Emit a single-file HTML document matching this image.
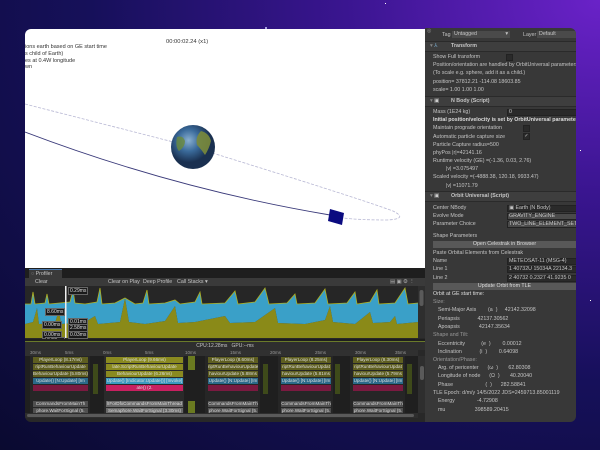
<!DOCTYPE html>
<html><head><meta charset="utf-8"><style>
*{margin:0;padding:0;box-sizing:border-box}
body{width:600px;height:450px;overflow:hidden;position:relative;font-family:"Liberation Sans",sans-serif;
background:radial-gradient(ellipse at 100% 0%,#6a22c8 0%,#3a1590 30%,#16105a 60%,#0a0a30 100%);}
.a{position:absolute;white-space:nowrap}
#ins{position:absolute;left:425px;top:28px;width:151px;height:394px;background:#383838;border-radius:0 6px 6px 0;overflow:hidden;color:#c4c4c4;font-size:5.3px}
#ins .a{line-height:7px}
.hd{position:absolute;left:0;width:151px;height:11px;background:#3e3e3e;border-top:1px solid #2a2a2a;border-bottom:1px solid #2a2a2a}
.fld{position:absolute;left:82px;width:70px;height:7px;background:#2a2a2a;border:1px solid #222}
.btn{position:absolute;left:8px;width:143px;height:7px;background:#585858;text-align:center;line-height:7px;color:#ddd}
.cb{position:absolute;width:7px;height:7px;background:#2a2a2a;border:1px solid #222}
#prof{position:absolute;left:25px;top:268px;width:400px;height:154px;background:#282828;border-radius:0 0 0 6px;overflow:hidden;font-size:5.3px;color:#c4c4c4}
.bar{position:absolute;height:6px;line-height:6px;font-size:4.6px;color:#ddd;text-align:center;overflow:hidden}
.lbl{position:absolute;background:#1a1a1a;color:#ddd;font-size:5px;padding:0 1px;line-height:6px;border:1px solid #666}
</style></head><body>
<div class="a" style="left:50px;top:384px;width:2px;height:2px;background:#fff;border-radius:1px"></div>
<div class="a" style="left:265px;top:27px;width:2px;height:2px;background:#ccf;border-radius:1px"></div>
<div class="a" style="left:580px;top:150px;width:1px;height:1px;background:#fff"></div>
<div class="a" style="left:590px;top:300px;width:1px;height:1px;background:#fff"></div>
<div class="a" style="left:385px;top:3px;width:1px;height:1px;background:#fff"></div>

<div class="a" style="left:25px;top:29px;width:400px;height:239px;background:#fff;border-radius:6px 0 0 0;overflow:hidden">
<div class="a" style="left:0;top:15px;font-size:5.5px;line-height:6.8px;color:#333">ions earth based on GE start time<br>s child of Earth)<br>es at 0.4W longitude<br>wn</div>
<div class="a" style="left:141px;top:10px;font-size:5.8px;color:#333">00:00:02.24 (x1)</div>
<svg class="a" style="left:0;top:0" width="400" height="239">
<path d="M0 75 L168 118 Q330 168 368 182 Q384 190 362 191 Q335 191 318 189" fill="none" stroke="#b8b8d4" stroke-width="0.8" stroke-dasharray="3 1.5"/>
<path d="M0 103 Q150 160 305 186" fill="none" stroke="#3a3a7a" stroke-width="0.9"/>
<defs><radialGradient id="e" cx="40%" cy="35%"><stop offset="0" stop-color="#8ab0d0"/><stop offset="0.5" stop-color="#3a6a9a"/><stop offset="1" stop-color="#1a3050"/></radialGradient></defs>
<circle cx="168" cy="118" r="22" fill="url(#e)"/>
<path d="M176 102 q8 2 10 10 q-2 8 -6 14 q-4 -6 -8 -10 q-2 -8 4 -14z" fill="#7a8a3a" opacity="0.9"/>
<path d="M152 108 q6 -2 8 4 q0 6 -6 10 q-4 -4 -2 -14z" fill="#6a8a3a" opacity="0.8"/>
<path d="M305 180 l14 4 l-2 12 l-14 -4z" fill="#0a0a80"/>
</svg>
</div>

<div id="ins">
<div class="a" style="left:2px;top:0;font-size:5px;color:#999">◎</div>
<div class="a" style="left:17px;top:4px">Tag</div>
<div class="a" style="left:27px;top:3px;width:58px;height:7px;background:#4a4a4a;padding-left:2px;line-height:7px">Untagged<span style="float:right;padding-right:2px">▾</span></div>
<div class="a" style="left:98px;top:4px">Layer</div>
<div class="a" style="left:112px;top:3px;width:40px;height:7px;background:#4a4a4a;padding-left:2px;line-height:7px">Default</div>

<div class="hd" style="top:13px"></div><div class="a" style="left:5px;top:15px;color:#888">▾ <span style="color:#7ac">⅄</span></div><div class="a" style="left:26px;top:15px;font-weight:bold">Transform</div>
<div class="a" style="left:8px;top:26px">Show Full transform</div><div class="cb" style="left:81px;top:26px"></div>
<div class="a" style="left:8px;top:34px">Position/orientation are handled by OrbitUniversal parameters</div>
<div class="a" style="left:8px;top:42px">(To scale e.g. sphere, add it as a child.)</div>
<div class="a" style="left:8px;top:51px">position= 37812.21 -114.08 18603.85</div>
<div class="a" style="left:8px;top:59px">scale= 1.00 1.00 1.00</div>

<div class="hd" style="top:68px"></div><div class="a" style="left:5px;top:70px;color:#888">▾ <span style="color:#ccc">▣</span></div><div class="a" style="left:26px;top:70px;font-weight:bold">N Body (Script)</div>
<div class="a" style="left:8px;top:81px">Mass (1E24 kg)</div><div class="fld" style="top:81px"></div><div class="a" style="left:84px;top:81px">0</div>
<div class="a" style="left:8px;top:89px;font-weight:bold;color:#ddd">Initial position/velocity is set by OrbitUniversal parameters</div>
<div class="a" style="left:8px;top:97px">Maintain prograde orientation</div><div class="cb" style="left:98px;top:97px"></div>
<div class="a" style="left:8px;top:106px">Automatic particle capture size</div><div class="cb" style="left:98px;top:105px;font-size:5px;line-height:5px;text-align:center">✓</div>
<div class="a" style="left:8px;top:114px">Particle Capture radius=500</div>
<div class="a" style="left:8px;top:122px">phyPos |r|=42141.16</div>
<div class="a" style="left:8px;top:130px">Runtime velocity (GE) =(-1.36, 0.03, 2.76)</div>
<div class="a" style="left:21px;top:138px">|v| =3.075497</div>
<div class="a" style="left:8px;top:146px">Scaled velocity =(-4888.38, 120.18, 9933.47)</div>
<div class="a" style="left:21px;top:155px">|v| =11071.79</div>

<div class="hd" style="top:163px"></div><div class="a" style="left:5px;top:165px;color:#888">▾ <span style="color:#ccc">▣</span></div><div class="a" style="left:26px;top:165px;font-weight:bold">Orbit Universal (Script)</div>
<div class="a" style="left:8px;top:177px">Center NBody</div><div class="fld" style="top:177px"></div><div class="a" style="left:84px;top:177px">▣ Earth (N Body)</div>
<div class="a" style="left:8px;top:185px">Evolve Mode</div><div class="fld" style="top:185px;background:#4a4a4a"></div><div class="a" style="left:84px;top:185px">GRAVITY_ENGINE</div>
<div class="a" style="left:8px;top:193px">Parameter Choice</div><div class="fld" style="top:193px;background:#4a4a4a"></div><div class="a" style="left:84px;top:193px">TWO_LINE_ELEMENT_SET</div>
<div class="a" style="left:8px;top:205px">Shape Parameters</div>
<div class="btn" style="top:213px">Open Celestrak in Browser</div>
<div class="a" style="left:8px;top:222px">Paste Orbital Elements from Celestrak</div>
<div class="a" style="left:8px;top:230px">Name</div><div class="fld" style="top:230px"></div><div class="a" style="left:84px;top:230px">METEOSAT-11 (MSG-4)</div>
<div class="a" style="left:8px;top:238px">Line 1</div><div class="fld" style="top:238px"></div><div class="a" style="left:84px;top:238px">1 40732U 15034A 22134.3</div>
<div class="a" style="left:8px;top:247px">Line 2</div><div class="fld" style="top:247px"></div><div class="a" style="left:84px;top:247px">2 40732 0.2327 41.9235 0</div>
<div class="btn" style="top:255px">Update Orbit from TLE</div>
<div class="a" style="left:8px;top:263px;color:#ddd">Orbit at GE start time:</div>
<div class="a" style="left:8px;top:271px;color:#999">Size:</div>
<div class="a" style="left:13px;top:279px">Semi-Major Axis &nbsp;&nbsp;&nbsp;&nbsp;&nbsp;&nbsp;&nbsp;(a &nbsp;) &nbsp;&nbsp;&nbsp;&nbsp;42142.32098</div>
<div class="a" style="left:13px;top:288px">Periapsis &nbsp;&nbsp;&nbsp;&nbsp;&nbsp;&nbsp;&nbsp;&nbsp;&nbsp;&nbsp;&nbsp;42137.30562</div>
<div class="a" style="left:13px;top:296px">Apoapsis &nbsp;&nbsp;&nbsp;&nbsp;&nbsp;&nbsp;&nbsp;&nbsp;&nbsp;&nbsp;&nbsp;&nbsp;42147.35634</div>
<div class="a" style="left:8px;top:304px;color:#999">Shape and Tilt:</div>
<div class="a" style="left:13px;top:313px">Eccentricity &nbsp;&nbsp;&nbsp;&nbsp;&nbsp;&nbsp;&nbsp;&nbsp;&nbsp;&nbsp;(e &nbsp;) &nbsp;&nbsp;&nbsp;&nbsp;&nbsp;&nbsp;&nbsp;0.00012</div>
<div class="a" style="left:13px;top:321px">Inclination &nbsp;&nbsp;&nbsp;&nbsp;&nbsp;&nbsp;&nbsp;&nbsp;&nbsp;&nbsp;&nbsp;(i &nbsp;) &nbsp;&nbsp;&nbsp;&nbsp;&nbsp;&nbsp;&nbsp;0.64098</div>
<div class="a" style="left:8px;top:329px;color:#999">Orientation/Phase:</div>
<div class="a" style="left:13px;top:337px">Arg. of pericenter &nbsp;&nbsp;&nbsp;&nbsp;&nbsp;(ω &nbsp;) &nbsp;&nbsp;&nbsp;&nbsp;&nbsp;&nbsp;62.80308</div>
<div class="a" style="left:13px;top:345px">Longitude of node &nbsp;&nbsp;&nbsp;&nbsp;&nbsp;(Ω &nbsp;) &nbsp;&nbsp;&nbsp;&nbsp;&nbsp;&nbsp;40.20040</div>
<div class="a" style="left:13px;top:354px">Phase &nbsp;&nbsp;&nbsp;&nbsp;&nbsp;&nbsp;&nbsp;&nbsp;&nbsp;&nbsp;&nbsp;&nbsp;&nbsp;&nbsp;&nbsp;&nbsp;&nbsp;&nbsp;&nbsp;&nbsp;&nbsp;(&nbsp;&nbsp;) &nbsp;&nbsp;&nbsp;&nbsp;&nbsp;282.58841</div>
<div class="a" style="left:8px;top:362px">TLE Epoch: d/m/y 14/5/2022 JDS=2459713.85001119</div>
<div class="a" style="left:13px;top:370px">Energy &nbsp;&nbsp;&nbsp;&nbsp;&nbsp;&nbsp;&nbsp;&nbsp;&nbsp;&nbsp;&nbsp;&nbsp;&nbsp;&nbsp;-4.72908</div>
<div class="a" style="left:13px;top:379px">mu &nbsp;&nbsp;&nbsp;&nbsp;&nbsp;&nbsp;&nbsp;&nbsp;&nbsp;&nbsp;&nbsp;&nbsp;&nbsp;&nbsp;&nbsp;&nbsp;&nbsp;&nbsp;&nbsp;398589.20415</div>
</div>

<div id="prof">
<div class="a" style="left:0;top:0;width:400px;height:10px;background:#1e1e1e"></div>
<div class="a" style="left:4px;top:1px;width:33px;height:9px;background:#3a3a3a;border-top:1px solid #4a7ab0;padding-left:2px;line-height:8px">◌ Profiler</div>
<div class="a" style="left:0;top:10px;width:400px;height:8px;background:#3a3a3a;line-height:8px">
<span style="position:absolute;left:10px">Clear</span><span style="position:absolute;left:83px">Clear on Play</span><span style="position:absolute;left:118px">Deep Profile</span><span style="position:absolute;left:152px">Call Stacks ▾</span><span style="position:absolute;left:365px;color:#aaa">▤ ▣ ⚙ ⋮</span></div>
<svg class="a" style="left:0;top:18px" width="400" height="52">
<rect width="400" height="52" fill="#262626"/>
<polygon fill="#8a8a18" points="0,52 0,38 8,36 12,22 14,38 30,37 34,24 36,38 60,36 70,30 73,38 95,36 100,12 104,36 120,38 140,35 150,20 153,37 170,36 200,30 205,37 230,36 250,22 253,37 280,38 300,34 305,20 308,36 330,38 345,26 348,37 365,36 370,30 372,38 393,36 393,52"/>
<polygon fill="#3aa0c8" points="0,38 0,18 6,18 8,6 10,18 20,17 22,8 24,18 45,16 48,4 50,17 60,18 72,16 75,2 77,18 90,17 100,12 110,18 118,17 122,4 124,18 140,17 150,14 155,18 170,16 175,6 177,18 200,17 210,5 213,18 230,16 240,2 244,18 262,17 270,8 272,18 290,17 300,3 303,18 322,17 330,6 332,18 345,16 352,4 354,18 370,17 380,2 383,18 393,17 393,36 372,38 370,30 365,36 348,37 345,26 330,38 308,36 305,20 300,34 280,38 253,37 250,22 230,36 205,37 200,30 170,36 153,37 150,20 140,35 120,38 104,36 100,12 95,36 73,38 70,30 60,36 36,38 34,24 30,37 14,38 12,22 8,36"/>
<polyline fill="none" stroke="#b0b020" stroke-width="0.8" points="0,18 6,18 8,6 10,18 20,17 22,8 24,18 45,16 48,4 50,17 60,18 72,16 75,2 77,18 90,17 100,12 110,18 118,17 122,4 124,18 140,17 150,14 155,18 170,16 175,6 177,18 200,17 210,5 213,18 230,16 240,2 244,18 262,17 270,8 272,18 290,17 300,3 303,18 322,17 330,6 332,18 345,16 352,4 354,18 370,17 380,2 383,18 393,17"/>
<rect x="393" y="0" width="7" height="52" fill="#2e2e2e"/><rect x="394.5" y="4" width="4" height="16" rx="2" fill="#5a5a5a"/>
<rect x="40" y="0" width="1.5" height="52" fill="#eee"/>
</svg>
<div class="lbl" style="left:43px;top:19px">0.29ms</div>
<div class="lbl" style="left:20px;top:40px">8.60ms</div>
<div class="lbl" style="left:17px;top:53px">0.00ms</div><div class="lbl" style="left:43px;top:50px">0.01ms</div>
<div class="lbl" style="left:43px;top:56px">2.58ms</div>
<div class="lbl" style="left:17px;top:63px">0.00ms</div><div class="lbl" style="left:43px;top:63px">0.03ms</div>
<div class="lbl" style="left:20px;top:69px">3.27ms</div>
<div class="a" style="left:0;top:71px;width:400px;height:3px;background:#1e1e1e;border-bottom:1px solid #6a7a2a"></div>
<div class="a" style="left:0;top:74px;width:400px;height:8px;background:#2e2e2e;text-align:center;line-height:8px;font-size:5px">CPU:12.28ms &nbsp; GPU:--ms</div>
<div class="a" style="left:0;top:82px;width:393px;height:6px;background:#303030;font-size:4.5px;line-height:6px;color:#999"><span style="position:absolute;left:5px">30ms</span><span style="position:absolute;left:40px">5ms</span><span style="position:absolute;left:78px">0ms</span><span style="position:absolute;left:120px">5ms</span><span style="position:absolute;left:160px">10ms</span><span style="position:absolute;left:205px">15ms</span><span style="position:absolute;left:245px">20ms</span><span style="position:absolute;left:290px">25ms</span><span style="position:absolute;left:330px">30ms</span><span style="position:absolute;left:370px">35ms</span></div>
<div class="a" style="left:0;top:88px;width:393px;height:57px;background:#1f1f1f"></div>
<div class="a" style="left:5px;top:88px;width:60px;height:57px;background:#262626"></div>
<div class="a" style="left:79px;top:88px;width:80px;height:57px;background:#2a2a2a"></div>
<div class="a" style="left:180px;top:88px;width:55px;height:57px;background:#262626"></div>
<div class="a" style="left:253px;top:88px;width:55px;height:57px;background:#262626"></div>
<div class="a" style="left:325px;top:88px;width:55px;height:57px;background:#262626"></div>
<div class="bar" style="left:8px;top:89px;width:55px;background:#5e5e20">PlayerLoop (8.17ms)</div>
<div class="bar" style="left:8px;top:96px;width:55px;background:#5e5e20">riptRunBehaviourUpdate</div>
<div class="bar" style="left:8px;top:103px;width:55px;background:#5e5e20">BehaviourUpdate (5.80ms)</div>
<div class="bar" style="left:8px;top:110px;width:55px;background:#2a6a8a">Update() [N:Update] [Im</div>
<div class="bar" style="left:8px;top:117px;width:55px;background:#7a1a40"></div>
<div class="bar" style="left:8px;top:133px;width:55px;background:#505050">CommandsFromMainTh</div>
<div class="bar" style="left:8px;top:140px;width:55px;background:#505050">phore.WaitForSignal (5.</div>
<div class="bar" style="left:81px;top:89px;width:77px;background:#8a8a20">PlayerLoop (9.66ms)</div>
<div class="bar" style="left:81px;top:96px;width:77px;background:#8a8a20">late.ScriptRunBehaviourUpdate (6.25ms</div>
<div class="bar" style="left:81px;top:103px;width:77px;background:#8a8a20">BehaviourUpdate (6.26ms)</div>
<div class="bar" style="left:81px;top:110px;width:77px;background:#3a9ac0">Update() [Indicator.Update()] [Invoke] (</div>
<div class="bar" style="left:81px;top:117px;width:77px;background:#c82060">ate() (2.</div>
<div class="bar" style="left:81px;top:133px;width:77px;background:#6a6a6a">lIForDfxCommandsFromMainThread (8</div>
<div class="bar" style="left:81px;top:140px;width:77px;background:#6a6a6a">Semaphore.WaitForSignal (3.30ms)</div>
<div class="a" style="left:163px;top:88px;width:7px;height:14px;background:#6a7a20"></div>
<div class="a" style="left:163px;top:133px;width:7px;height:12px;background:#6a7a20"></div>
<div class="bar" style="left:183px;top:89px;width:50px;background:#5e5e20">PlayerLoop (8.60ms)</div>
<div class="bar" style="left:183px;top:96px;width:50px;background:#5e5e20">riptRunBehaviourUpdate</div>
<div class="bar" style="left:183px;top:103px;width:50px;background:#5e5e20">haviourUpdate (5.88ms</div>
<div class="bar" style="left:183px;top:110px;width:50px;background:#2a6a8a">Update() [N:Update] [Im</div>
<div class="bar" style="left:183px;top:117px;width:50px;background:#7a1a40"></div>
<div class="bar" style="left:183px;top:133px;width:50px;background:#505050">CommandsFromMainTh</div>
<div class="bar" style="left:183px;top:140px;width:50px;background:#505050">phore.WaitForSignal (5.</div>
<div class="bar" style="left:256px;top:89px;width:50px;background:#5e5e20">PlayerLoop (8.25ms)</div>
<div class="bar" style="left:256px;top:96px;width:50px;background:#5e5e20">riptRunBehaviourUpdat</div>
<div class="bar" style="left:256px;top:103px;width:50px;background:#5e5e20">haviourUpdate (5.81ms</div>
<div class="bar" style="left:256px;top:110px;width:50px;background:#2a6a8a">Update() [N:Update] [Im</div>
<div class="bar" style="left:256px;top:117px;width:50px;background:#7a1a40"></div>
<div class="bar" style="left:256px;top:133px;width:50px;background:#505050">CommandsFromMainTh</div>
<div class="bar" style="left:256px;top:140px;width:50px;background:#505050">phore.WaitForSignal (5.</div>
<div class="bar" style="left:328px;top:89px;width:50px;background:#5e5e20">PlayerLoop (8.30ms)</div>
<div class="bar" style="left:328px;top:96px;width:50px;background:#5e5e20">riptRunBehaviourUpdat</div>
<div class="bar" style="left:328px;top:103px;width:50px;background:#5e5e20">haviourUpdate (5.79ms</div>
<div class="bar" style="left:328px;top:110px;width:50px;background:#2a6a8a">Update() [N:Update] [Im</div>
<div class="bar" style="left:328px;top:117px;width:50px;background:#7a1a40"></div>
<div class="bar" style="left:328px;top:133px;width:50px;background:#505050">CommandsFromMainTh</div>
<div class="bar" style="left:328px;top:140px;width:50px;background:#505050">phore.WaitForSignal (5.</div>
<div class="a" style="left:68px;top:96px;width:5px;height:30px;background:#3e4a1a"></div>
<div class="a" style="left:238px;top:96px;width:5px;height:30px;background:#3e4a1a"></div>
<div class="a" style="left:310px;top:96px;width:5px;height:30px;background:#3e4a1a"></div>
<div class="a" style="left:382px;top:96px;width:5px;height:30px;background:#3e4a1a"></div>
<div class="a" style="left:393px;top:88px;width:7px;height:57px;background:#2e2e2e"></div>
<div class="a" style="left:394.5px;top:98px;width:4px;height:14px;border-radius:2px;background:#5a5a5a"></div>
<div class="a" style="left:0;top:145px;width:393px;height:5px;background:#2e2e2e"></div>
<div class="a" style="left:2px;top:146px;width:387px;height:3px;border-radius:2px;background:#5a5a5a"></div>
</div>
</body></html>
